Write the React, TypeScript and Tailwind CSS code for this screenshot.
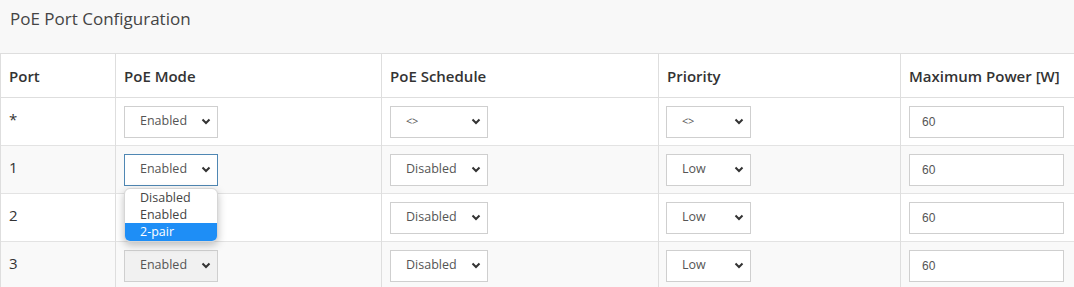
import React from "react";

type Row = {
  port: string;
  mode: string;
  schedule: string;
  priority: string;
  power: string;
  modeState?: "focus" | "disabled" | "open" | "covered";
};

const ROWS: Row[] = [
  { port: "*", mode: "Enabled", schedule: "<>", priority: "<>", power: "60" },
  { port: "1", mode: "Enabled", schedule: "Disabled", priority: "Low", power: "60", modeState: "open" },
  // row 2 select sits under the open list of row 1
  { port: "2", mode: "Enabled", schedule: "Disabled", priority: "Low", power: "60", modeState: "covered" },
  { port: "3", mode: "Enabled", schedule: "Disabled", priority: "Low", power: "60", modeState: "disabled" },
];

function Chevron() {
  return (
    <svg width="10" height="7" viewBox="0 0 10 7" className="shrink-0">
      <polyline points="1.5,1.5 5,5 8.5,1.5" fill="none" stroke="#333" strokeWidth="2" />
    </svg>
  );
}

function FakeSelect({
  value,
  width,
  state,
  small,
}: {
  value: string;
  width: string;
  state?: "focus" | "disabled" | "open" | "covered";
  small?: boolean;
}) {
  if (state === "covered") {
    return <div className={"h-[32px] " + width} />;
  }
  const border =
    state === "open" || state === "focus" ? "border-[#4f87b3]" : "border-[#cfcfcf]";
  const bg = state === "disabled" ? "bg-[#f1f1f1]" : "bg-white";
  return (
    <div
      className={
        "flex h-[32px] items-center justify-between border pl-[15px] pr-[6px] " +
        width + " " + border + " " + bg
      }
    >
      <span className={small ? "text-[11px] tracking-tight text-[#555]" : "text-[12.5px] text-[#555]"}>
        {value}
      </span>
      <Chevron />
    </div>
  );
}

function OpenList() {
  return (
    <div className="absolute left-0 top-[34px] z-10 w-[94px] overflow-hidden rounded-[6px] border border-[#d6d6d6] bg-white shadow-[0_3px_8px_rgba(0,0,0,0.25)]">
      <div className="h-[17px] pl-[15px] text-[12.5px] leading-[17px] text-[#444]">Disabled</div>
      <div className="h-[17px] pl-[15px] text-[12.5px] leading-[17px] text-[#444]">Enabled</div>
      <div className="h-[18px] bg-[#1e8ef6] pl-[15px] text-[12.5px] leading-[18px] text-white">2-pair</div>
    </div>
  );
}

export default function App() {
  return (
    <div className="h-[287px] w-[1074px] overflow-hidden bg-[#f8f8f8] font-['Open_Sans',sans-serif] text-[#333]">
      <div className="h-[53px] pl-[10px] pt-[6px] text-[17px] text-[#444]">
        PoE Port Configuration
      </div>
      <table className="w-[1074px] table-fixed border-collapse bg-white text-[15px]">
        <colgroup>
          <col className="w-[115px]" />
          <col className="w-[266px]" />
          <col className="w-[277px]" />
          <col className="w-[242px]" />
          <col className="w-[174px]" />
        </colgroup>
        <thead>
          <tr className="h-[44px] border-y border-[#dedede] text-left">
            <th className="border-x border-[#dedede] pl-[8px] pt-[2px] font-semibold text-[#333]">Port</th>
            <th className="border-x border-[#dedede] pl-[8px] pt-[2px] font-semibold text-[#333]">PoE Mode</th>
            <th className="border-x border-[#dedede] pl-[8px] pt-[2px] font-semibold text-[#333]">PoE Schedule</th>
            <th className="border-x border-[#dedede] pl-[8px] pt-[2px] font-semibold text-[#333]">Priority</th>
            <th className="border-x border-[#dedede] pl-[8px] pt-[2px] font-semibold text-[#333]">Maximum Power [W]</th>
          </tr>
        </thead>
        <tbody>
          {ROWS.map((r, i) => (
            <tr
              key={r.port}
              className={
                "h-[48px] border-b border-[#e3e3e3] " +
                (i % 2 === 1 ? "bg-[#f9f9f9]" : "bg-white")
              }
            >
              <td className="border-x border-[#dedede] pl-[8px] pt-[10px] align-top text-[15px] text-[#333]">
                {r.port}
              </td>
              <td className="border-x border-[#dedede] pl-[8px] align-middle">
                <div className="relative w-[94px]">
                  <FakeSelect value={r.mode} width="w-[94px]" state={r.modeState} />
                  {r.modeState === "open" && <OpenList />}
                </div>
              </td>
              <td className="border-x border-[#dedede] pl-[8px] align-middle">
                <FakeSelect value={r.schedule} width="w-[98px]" small={r.schedule === "<>"} />
              </td>
              <td className="border-x border-[#dedede] pl-[7px] align-middle">
                <FakeSelect value={r.priority} width="w-[85px]" small={r.priority === "<>"} />
              </td>
              <td className="border-x border-[#dedede] pl-[8px] align-middle">
                <div className="flex h-[32px] w-[155px] items-center border border-[#cfcfcf] bg-white pl-[12px] font-['Liberation_Sans',sans-serif] text-[12px] text-[#555]">
                  {r.power}
                </div>
              </td>
            </tr>
          ))}
        </tbody>
      </table>
    </div>
  );
}
